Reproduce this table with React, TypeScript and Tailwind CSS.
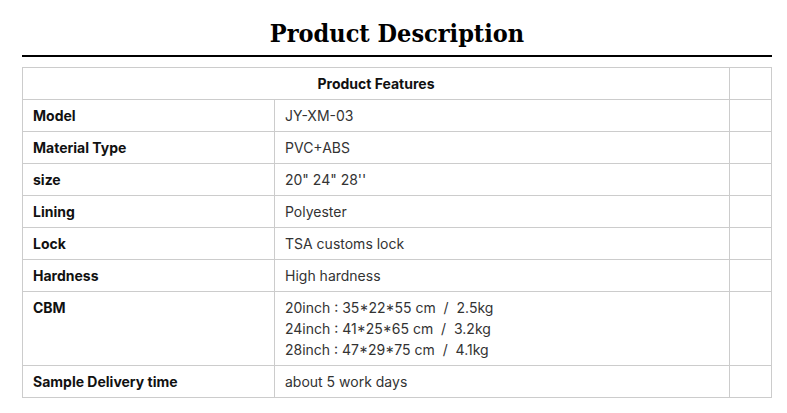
type Row = { label: string; value: string[] };

const rows: Row[] = [
  { label: "Model", value: ["JY-XM-03"] },
  { label: "Material Type", value: ["PVC+ABS"] },
  { label: "size", value: ["20\" 24\" 28''"] },
  { label: "Lining", value: ["Polyester"] },
  { label: "Lock", value: ["TSA customs lock"] },
  { label: "Hardness", value: ["High hardness"] },
  {
    label: "CBM",
    value: [
      "20inch : 35*22*55 cm  /  2.5kg",
      "24inch : 41*25*65 cm  /  3.2kg",
      "28inch : 47*29*75 cm  /  4.1kg",
    ],
  },
  { label: "Sample Delivery time", value: ["about 5 work days"] },
];

export default function App() {
  return (
    <div className="bg-white min-h-screen pl-[22px] pr-[15px] pt-[16px] font-['Inter',sans-serif]">
      <h2 className="text-center text-[25px] leading-[36px] font-bold text-black font-['DejaVu_Serif_Condensed','DejaVu_Serif',serif] [font-stretch:condensed]">
        Product Description
      </h2>
      <div className="h-[2px] bg-black mt-[3px]" />
      <table className="w-[750px] mt-[10px] border-collapse text-[14px] leading-[21px]">
        <tbody>
          <tr>
            <td colSpan={2} className="border border-[#cccccc] py-[5px] text-center font-bold text-[#111]">
              Product Features
            </td>
            <td className="border border-[#cccccc] w-[42px]" />
          </tr>
          {rows.map((r) => (
            <tr key={r.label}>
              <td className="border border-[#cccccc] w-[252px] px-[10px] py-[5px] align-top font-bold text-[#111]">
                {r.label}
              </td>
              <td className="border border-[#cccccc] px-[10px] py-[5px] align-top text-[#333]">
                {r.value.map((v) => (
                  <div key={v} className="whitespace-pre">
                    {v}
                  </div>
                ))}
              </td>
              <td className="border border-[#cccccc]" />
            </tr>
          ))}
        </tbody>
      </table>
    </div>
  );
}
